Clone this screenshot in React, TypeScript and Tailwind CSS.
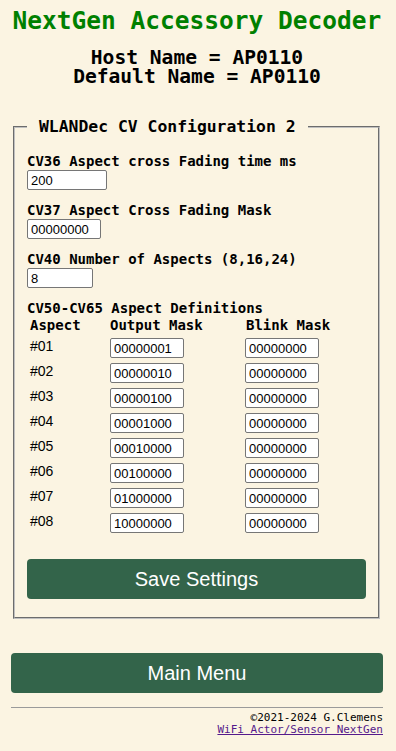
// CV-Konfigurationsseite des WLANDec (Aspekte / Masken)

const mono = 'font-["DejaVu_Sans_Mono","Liberation_Mono",monospace]';
const sans = 'font-["Liberation_Sans",Arial,sans-serif]';

const aspects = [
    { nr: '#01', out: '00000001', blink: '00000000' },
    { nr: '#02', out: '00000010', blink: '00000000' },
    { nr: '#03', out: '00000100', blink: '00000000' },
    { nr: '#04', out: '00001000', blink: '00000000' },
    { nr: '#05', out: '00010000', blink: '00000000' },
    { nr: '#06', out: '00100000', blink: '00000000' },
    { nr: '#07', out: '01000000', blink: '00000000' },
    { nr: '#08', out: '10000000', blink: '00000000' },
];

const Field = (props: { value: string, width: string }) => {
    return (
        <input
            defaultValue={props.value}
            className={`${sans} ${props.width} block h-[20px] border border-[#767676] rounded-[2px] bg-white px-[3px] text-[13px] text-black outline-none`}
        />
    );
}

const CvInput = (props: { label: string, value: string, width: string }) => {
    return (
        <div className="mb-[12px]">
            <label className={`${mono} block text-[14px] font-bold leading-[17px] text-black`}>{props.label}</label>
            <Field value={props.value} width={props.width} />
        </div>
    );
}

export default function App() {
    return (
        <div className="min-h-screen bg-[#fbf4e2] pl-[11px] pr-[13px] pb-2">

            {/* Kopf */}
            <h1 className={`${mono} pt-[6px] text-center text-[24.5px] font-bold leading-[30px] text-[#008000]`}>
                NextGen Accessory Decoder
            </h1>
            <h2 className={`${mono} mt-[12px] text-center text-[19.6px] font-bold leading-[19px] text-black`}>
                <div>Host Name = AP0110</div>
                <div>Default Name = AP0110</div>
            </h2>

            {/* CV Einstellungen */}
            <fieldset className="mt-[31px] ml-[2px] mr-[3px] border-2 border-[#c0c0c0] [border-style:groove] px-3 pt-[17px] pb-[18px]">
                <legend className={`${mono} px-3 text-[16.4px] font-bold leading-[19px] text-black`}>
                    WLANDec CV Configuration 2
                </legend>

                <CvInput label="CV36 Aspect cross Fading time ms" value="200" width="w-[80px]" />
                <CvInput label="CV37 Aspect Cross Fading Mask" value="00000000" width="w-[74px]" />
                <CvInput label="CV40 Number of Aspects (8,16,24)" value="8" width="w-[66px]" />

                <div className={`${mono} text-[14px] font-bold leading-[17px] text-black`}>
                    CV50-CV65 Aspect Definitions
                </div>

                {/* Tabelle der Aspekte */}
                <div className="flex flex-col gap-[5px] pl-[3px]">
                    <div className={`${mono} -mb-px flex text-[14px] font-bold leading-[17px] text-black`}>
                        <span className="w-[80px]">Aspect</span>
                        <span className="w-[136px]">Output Mask</span>
                        <span>Blink Mask</span>
                    </div>
                    {aspects.map((a) => (
                        <div key={a.nr} className="flex h-[20px] items-start">
                            <span className={`${sans} w-[80px] text-[14px] leading-[17px] text-black`}>{a.nr}</span>
                            <div className="w-[135px]"><Field value={a.out} width="w-[74px]" /></div>
                            <Field value={a.blink} width="w-[74px]" />
                        </div>
                    ))}
                </div>

                <button className={`${sans} mt-[26px] h-[40px] w-full rounded-[4px] bg-[#33644a] text-[20px] text-white`}>
                    Save Settings
                </button>
            </fieldset>

            {/* Hauptmenü */}
            <button className={`${sans} mt-[34px] h-[40px] w-full rounded-[4px] bg-[#33644a] text-[20px] text-white`}>
                Main Menu
            </button>

            {/* Fußzeile */}
            <hr className="mt-[14px] border-t border-[#9a9a9a]" />
            <div className={`${mono} mt-[4px] text-right text-[11px] leading-[12px] text-black`}>
                ©2021-2024 G.Clemens<br />
                <a href="#" className="text-[#551a8b] underline">WiFi Actor/Sensor NextGen</a>
            </div>
        </div>
    );
}
